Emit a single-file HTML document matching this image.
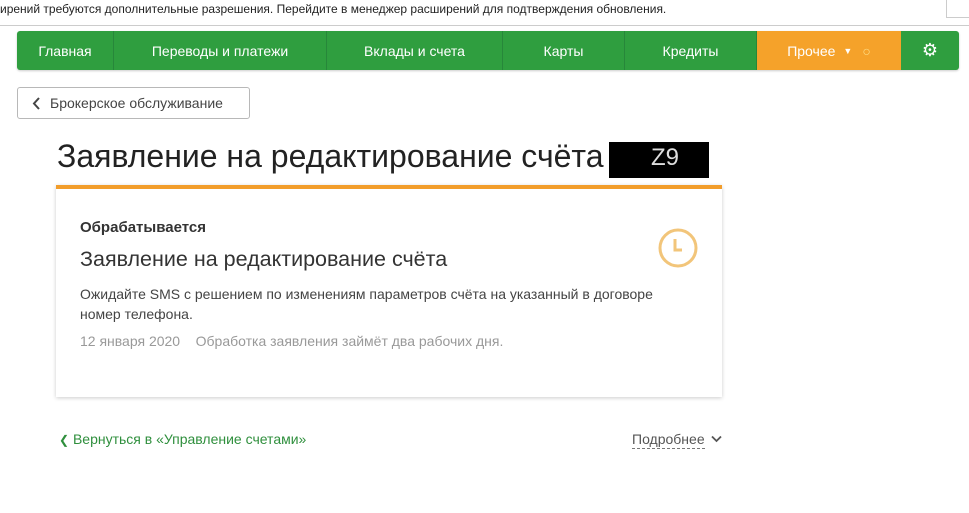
<!DOCTYPE html>
<html><head><meta charset="utf-8"><style>
*{box-sizing:border-box;margin:0;padding:0}
body{width:969px;height:513px;background:#fff;font-family:"Liberation Sans",sans-serif;color:#333;position:relative;overflow:hidden}
.abs{position:absolute}
.top{left:0;top:0;width:969px;height:26px;border-bottom:1px solid #ccc;font-size:12px;color:#222;padding:2px 0 0 0;white-space:nowrap}
.nav{left:17px;top:31px;width:942px;height:39px;background:#2f9e3f;border-radius:3px;display:flex;box-shadow:0 1px 2px rgba(0,0,0,.2);overflow:hidden}
.nav div{color:#fff;font-size:14px;display:flex;align-items:center;justify-content:center;border-right:1px solid #27873a;height:100%;flex:none}
.btn{left:17px;top:87px;width:233px;height:32px;border:1px solid #b8b8b8;border-radius:3px;font-size:14px;color:#444;padding:7px 0 0 32px}
.card{left:56px;top:185px;width:666px;height:212px;border-top:4px solid #f29d2b;box-shadow:0 1px 4px rgba(0,0,0,.2);background:#fff}
</style></head><body>
<div class="abs top">ирений требуются дополнительные разрешения. Перейдите в менеджер расширений для подтверждения обновления.</div>
<div class="abs" style="left:946px;top:0;width:23px;height:18px;border:1px solid #ccc;border-top:none;border-right:none"></div>
<div class="abs nav">
<div style="width:97px">Главная</div>
<div style="width:213px">Переводы и платежи</div>
<div style="width:176px">Вклады и счета</div>
<div style="width:122px">Карты</div>
<div style="width:132px">Кредиты</div>
<div style="width:144px;background:#f5a22a;border-right:none">Прочее <span style="font-size:9px;margin:0 10px 0 8px">▼</span><span style="color:#ffe08a">○</span></div>
<div style="width:58px;border-right:none;font-size:18px">⚙</div>
</div>
<div class="abs btn"><svg class="abs" style="left:14px;top:9px" width="9" height="13" viewBox="0 0 9 13"><path d="M7 1L2 6.5L7 12" stroke="#444" stroke-width="2" fill="none"/></svg>Брокерское обслуживание</div>
<div class="abs" style="left:57px;top:138px;font-size:32px;color:#222;white-space:nowrap">Заявление на редактирование счёта</div>
<div class="abs" style="left:609px;top:142px;width:100px;height:36px;background:#000;color:#ddd;font-size:24px;padding:2px 0 0 42px">Z9</div>
<div class="abs card">
<div class="abs" style="left:24px;top:30px;font-size:15px;font-weight:bold;color:#333">Обрабатывается</div>
<div class="abs" style="left:24px;top:58px;font-size:21.5px;color:#333;white-space:nowrap">Заявление на редактирование счёта</div>
<div class="abs" style="left:24px;top:96px;font-size:14px;line-height:19.5px;color:#444;width:600px">Ожидайте SMS с решением по изменениям параметров счёта на указанный в договоре номер телефона.</div>
<div class="abs" style="left:24px;top:144px;font-size:14px;color:#999;white-space:nowrap">12 января 2020&nbsp;&nbsp;&nbsp;&nbsp;Обработка заявления займёт два рабочих дня.</div>
<svg class="abs" style="left:601px;top:38px" width="42" height="42" viewBox="0 0 42 42"><circle cx="21" cy="21" r="18" stroke="#f2c57a" stroke-width="3" fill="none"/><path d="M18 12V23H25" stroke="#f2c57a" stroke-width="3" fill="none"/></svg>
</div>
<div class="abs" style="left:59px;top:431px;font-size:14px;color:#2f8f3d;white-space:nowrap"><span style="font-size:12px">❮</span> Вернуться в «Управление счетами»</div>
<div class="abs" style="left:632px;top:431px;font-size:14px;color:#555;border-bottom:1px dashed #777;line-height:17px">Подробнее</div>
<svg class="abs" style="left:711px;top:435px" width="11" height="8" viewBox="0 0 11 8"><path d="M1 1.5L5.5 6L10 1.5" stroke="#555" stroke-width="1.8" fill="none"/></svg>
</body></html>
